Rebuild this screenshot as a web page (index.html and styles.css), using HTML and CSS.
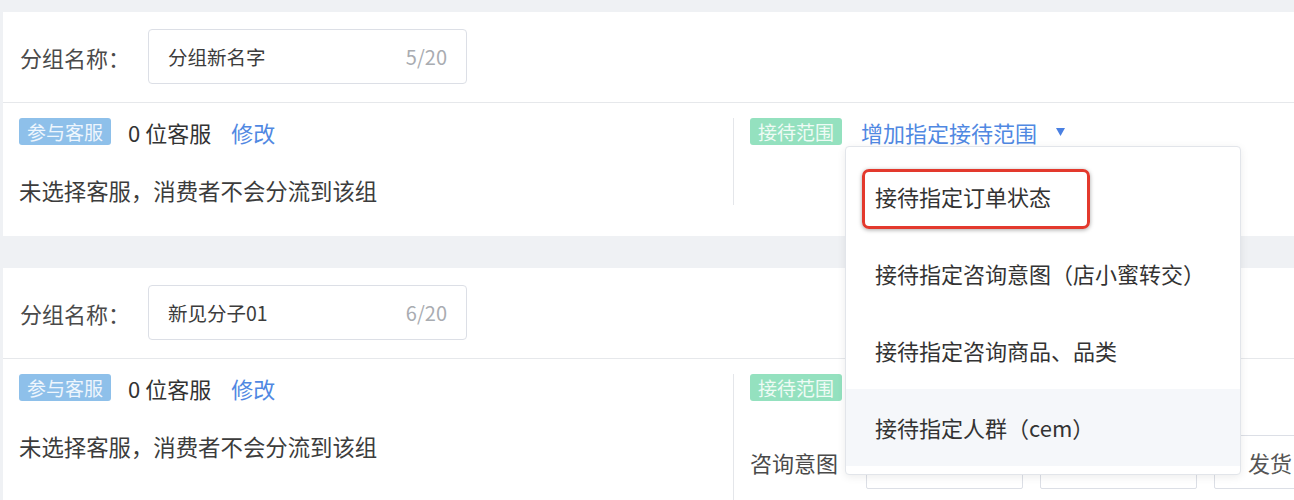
FILE: index.html
```html
<!DOCTYPE html>
<html lang="zh-CN">
<head>
<meta charset="utf-8">
<title>分组设置</title>
<link rel="stylesheet" href="styles.css">
</head>
<body>
<div class="page">
  <section class="card">
    <div class="name-row">
      <span class="name-label">分组名称：</span>
      <div class="name-input"><span class="name-value">分组新名字</span><span class="name-count">5/20</span></div>
    </div>
    <div class="detail-row">
      <div class="col col-left">
        <div class="tag-line">
          <span class="tag tag-blue">参与客服</span>
          <span class="staff-count">0 位客服</span>
          <span class="link">修改</span>
        </div>
        <p class="hint">未选择客服，消费者不会分流到该组</p>
      </div>
      <div class="col col-right">
        <div class="tag-line">
          <span class="tag tag-green">接待范围</span>
          <span class="trigger">
            <span class="link">增加指定接待范围</span>
            <svg class="caret" width="9" height="8" viewBox="0 0 9 8"><path d="M0 0H9L4.5 8Z" fill="#4a80e2"/></svg>
            <div class="dropdown">
              <div class="dd-item">接待指定订单状态</div>
              <div class="dd-item">接待指定咨询意图（店小蜜转交）</div>
              <div class="dd-item">接待指定咨询商品、品类</div>
              <div class="dd-item dd-hover">接待指定人群（cem）</div>
              <div class="mark"></div>
            </div>
          </span>
        </div>
      </div>
    </div>
  </section>

  <section class="card">
    <div class="name-row">
      <span class="name-label">分组名称：</span>
      <div class="name-input"><span class="name-value">新见分子01</span><span class="name-count">6/20</span></div>
    </div>
    <div class="detail-row">
      <div class="col col-left">
        <div class="tag-line">
          <span class="tag tag-blue">参与客服</span>
          <span class="staff-count">0 位客服</span>
          <span class="link">修改</span>
        </div>
        <p class="hint">未选择客服，消费者不会分流到该组</p>
      </div>
      <div class="col col-right col-tall">
        <div class="tag-line">
          <span class="tag tag-green">接待范围</span>
        </div>
        <div class="scope-row">
          <span class="scope-label">咨询意图</span>
          <div class="scope-box"></div>
          <div class="scope-box"></div>
          <div class="scope-box scope-text">发货</div>
        </div>
      </div>
    </div>
  </section>
</div>
</body>
</html>
```

FILE: styles.css
```css
html, body {
  margin: 0;
  padding: 0;
  background: #eff1f4;
  overflow: hidden;
  height: 500px;
}

body {
  font-family: "Noto Sans CJK SC", "Noto Sans", sans-serif;
  color: #333;
}

.page {
  padding: 12px 0 0 3px;
  width: 1330px;
  display: flex;
  flex-direction: column;
  gap: 32px;
}

.card {
  background: #fff;
}

.name-row {
  display: flex;
  align-items: center;
  padding: 17px 0 18px 17px;
  border-bottom: 1px solid #e6e8eb;
}

.name-label {
  width: 128px;
  font-size: 22px;
  line-height: 30px;
  color: #4a4a4a;
}

.name-input {
  width: 319px;
  height: 55px;
  box-sizing: border-box;
  border: 1px solid #dcdfe6;
  border-radius: 4px;
  display: flex;
  align-items: center;
  justify-content: space-between;
  padding: 0 19px 0 19px;
  font-size: 19.5px;
}

.name-value {
  color: #3c3c3c;
}

.name-count {
  color: #a9acb1;
  font-size: 20px;
}

.detail-row {
  display: flex;
  padding: 15px 0 31px;
}

.col-left {
  flex: 0 0 714px;
  padding-left: 16px;
  border-right: 1px solid #e4e6ea;
}

.col-right {
  flex: 1;
  padding-left: 16px;
}

.col-tall {
  min-height: 160px;
}

.tag-line {
  display: flex;
  align-items: center;
  height: 27px;
}

.tag {
  height: 27px;
  line-height: 27px;
  padding: 0 8px;
  font-size: 19px;
  border-radius: 3px;
  color: #eef6fd;
  margin-right: 17px;
}

.tag-blue {
  background: #8ec0ea;
}

.tag-green {
  background: #94e1bf;
  color: #effbf5;
  margin-right: 19px;
}

.staff-count {
  font-size: 22px;
  color: #333;
  margin-right: 20px;
}

.link {
  font-size: 22px;
  color: #5088e2;
}

.hint {
  margin: 30px 0 0;
  font-size: 22.4px;
  line-height: 30px;
  color: #3c3c3c;
}

.trigger {
  position: relative;
  display: flex;
  align-items: center;
  height: 27px;
}

.caret {
  margin-left: 19px;
  margin-top: 1px;
}

.dropdown {
  position: absolute;
  left: -16px;
  top: 28px;
  width: 396px;
  box-sizing: border-box;
  background: #fff;
  border: 1px solid #e2e5ea;
  border-radius: 4px;
  box-shadow: 0 2px 8px rgba(0, 0, 0, 0.08);
  padding: 11px 0 8px;
  z-index: 10;
}

.dd-item {
  height: 77px;
  line-height: 77px;
  padding-left: 29px;
  font-size: 22px;
  color: #333;
  white-space: nowrap;
}

.dd-hover {
  background: #f5f7fa;
}

.mark {
  position: absolute;
  left: 16px;
  top: 22px;
  width: 228px;
  height: 60px;
  box-sizing: border-box;
  border: 3px solid #e3392d;
  border-radius: 7px;
  box-shadow: 0 1px 4px rgba(0, 0, 0, 0.35);
}

.scope-row {
  display: flex;
  align-items: center;
  gap: 17px;
  margin-top: 34px;
}

.scope-label {
  font-size: 22px;
  color: #4a4a4a;
  width: 99px;
}

.scope-box {
  width: 157px;
  height: 54px;
  box-sizing: border-box;
  border: 1px solid #dcdfe6;
  border-radius: 2px;
  flex: 0 0 auto;
}

.scope-text {
  display: flex;
  align-items: center;
  padding-left: 33px;
  font-size: 22px;
  color: #555;
  white-space: nowrap;
}
```
